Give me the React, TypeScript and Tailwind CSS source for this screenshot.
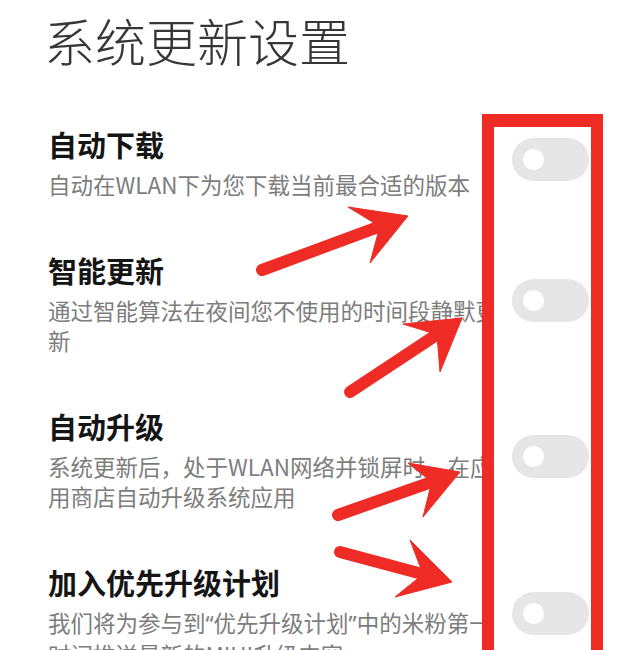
import { Fragment } from "react";

type Pt = [number, number];

const settings = [
  { title: "自动下载", desc: "自动在WLAN下为您下载当前最合适的版本" },
  { title: "智能更新", desc: "通过智能算法在夜间您不使用的时间段静默更新" },
  { title: "自动升级", desc: "系统更新后，处于WLAN网络并锁屏时，在应用商店自动升级系统应用" },
  { title: "加入优先升级计划", desc: "我们将为参与到“优先升级计划”中的米粉第一时间推送最新的MIUI升级内容" },
];

// tail, tip, upper barb, lower barb
const arrows: [Pt, Pt, Pt, Pt][] = [
  [[262, 270], [408, 216], [348, 207], [370, 263]],
  [[350, 392], [462, 318], [403, 324], [440, 372]],
  [[338, 515], [460, 472], [408, 463], [423, 517]],
  [[340, 552], [452, 582], [410, 540], [395, 597]],
];

function Arrow({ tail, tip, a, b }: { tail: Pt; tip: Pt; a: Pt; b: Pt }) {
  const dx = tail[0] - tip[0];
  const dy = tail[1] - tip[1];
  const len = Math.hypot(dx, dy);
  const notch: Pt = [tip[0] + (dx / len) * 30, tip[1] + (dy / len) * 30];
  const neck: Pt = [tip[0] + (dx / len) * 22, tip[1] + (dy / len) * 22];
  return (
    <g fill="#ee2b25" stroke="#ee2b25">
      <line x1={tail[0]} y1={tail[1]} x2={neck[0]} y2={neck[1]} strokeWidth={12} strokeLinecap="round" />
      <polygon points={[tip, a, notch, b].map((p) => p.join(",")).join(" ")} strokeWidth={1} strokeLinejoin="round" />
    </g>
  );
}

// curly quotes set in a proportional face so they don't take a full CJK cell
function Desc({ text }: { text: string }) {
  return (
    <>
      {text.split(/([“”])/).map((part, i) =>
        part === "“" || part === "”" ? (
          <span key={i} className="font-['Noto_Sans']">
            {part}
          </span>
        ) : (
          <Fragment key={i}>{part}</Fragment>
        )
      )}
    </>
  );
}

function Toggle() {
  return (
    <div className="relative z-10 ml-[9px] mb-[7px] flex h-[43px] w-[77px] shrink-0 items-center rounded-full bg-[#e6e6e6]">
      <span className="ml-[11px] h-[21px] w-[21px] rounded-full bg-white" />
    </div>
  );
}

export default function App() {
  return (
    <div
      className="relative h-[650px] w-full overflow-hidden bg-white pl-[48px] pt-[15px]"
      style={{ fontFamily: '"Noto Sans CJK SC", "Noto Sans", sans-serif' }}
    >
      <h1 className="-ml-1 text-[51px] leading-none font-light text-[#363636]">系统更新设置</h1>

      <div className="mt-[60px] flex flex-col gap-[53px]">
        {settings.map((s) => (
          <div key={s.title} className="flex items-center">
            <div className="w-[455px]">
              <div className="text-[29px] leading-[36px] font-semibold text-[#151515]">{s.title}</div>
              <p className="mt-[7px] text-[22.5px] leading-[30px] text-[#7d7d7d]">
                <Desc text={s.desc} />
              </p>
            </div>
            <Toggle />
          </div>
        ))}
      </div>

      {/* red annotation frame around the switches, blanking the text behind it */}
      <div className="absolute left-[482px] top-[114px] h-[600px] w-[121px] border-x-[12px] border-t-[13px] border-[#ee2b25] bg-white" />

      <svg className="pointer-events-none absolute inset-0" width="638" height="650" viewBox="0 0 638 650">
        {arrows.map(([tail, tip, a, b], i) => (
          <Arrow key={i} tail={tail} tip={tip} a={a} b={b} />
        ))}
      </svg>
    </div>
  );
}
